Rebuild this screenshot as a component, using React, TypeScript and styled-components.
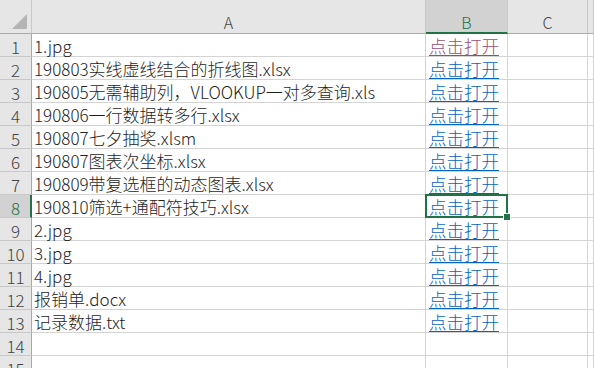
import React from "react";
import styled, { createGlobalStyle, css } from "styled-components";

const Global = createGlobalStyle`
  html, body { margin: 0; padding: 0; background: #ffffff; overflow: hidden; }
  body { font-family: "Noto Sans CJK SC", "Liberation Sans", sans-serif; }
`;

const COLS = "32px 394px 82px 80px 1fr";

const Sheet = styled.div`
  width: 594px;
  height: 368px;
  overflow: hidden;
  background: #fff;
`;

const Row = styled.div<{ $header?: boolean }>`
  display: grid;
  grid-template-columns: ${COLS};
  height: ${(p) => (p.$header ? "34px" : "23px")};
`;

const Corner = styled.div`
  position: relative;
  background: #e6e6e6;
  border-right: 1px solid #c8c8c8;
  border-bottom: 1px solid #a9a9a9;
  box-sizing: border-box;
`;

const Triangle = styled.div`
  position: absolute;
  right: 4px;
  bottom: 4px;
  width: 0;
  height: 0;
  border-left: 15px solid transparent;
  border-bottom: 15px solid #b4b4b4;
`;

const ColHead = styled.div<{ $sel?: boolean }>`
  box-sizing: border-box;
  background: ${(p) => (p.$sel ? "#d2d2d2" : "#e6e6e6")};
  border-right: 1px solid #c8c8c8;
  border-bottom: ${(p) => (p.$sel ? "2px solid #217346" : "1px solid #a9a9a9")};
  color: ${(p) => (p.$sel ? "#217346" : "#444444")};
  font-size: 16px;
  font-weight: 300;
  display: flex;
  align-items: flex-end;
  justify-content: center;
  padding-bottom: ${(p) => (p.$sel ? "0px" : "1px")};
  line-height: 20px;
`;

const RowHead = styled.div<{ $sel?: boolean }>`
  box-sizing: border-box;
  background: ${(p) => (p.$sel ? "#d2d2d2" : "#e6e6e6")};
  border-right: ${(p) => (p.$sel ? "2px solid #217346" : "1px solid #a9a9a9")};
  border-bottom: 1px solid #c8c8c8;
  color: ${(p) => (p.$sel ? "#217346" : "#444444")};
  font-size: 17px;
  font-weight: 300;
  display: flex;
  align-items: center;
  justify-content: center;
  line-height: 19px;
  padding-top: 2px;
  padding-left: ${(p) => (p.$sel ? "1px" : "0")};
`;

const Cell = styled.div<{ $sel?: boolean }>`
  position: relative;
  box-sizing: border-box;
  border-right: 1px solid #d4d4d4;
  border-bottom: 1px solid #d4d4d4;
  font-size: 17px;
  font-weight: 300;
  color: #1e1e1e;
  display: flex;
  align-items: center;
  padding-left: 2px;
  padding-top: 2px;
  white-space: nowrap;
  overflow: visible;
  line-height: 20px;
  ${(p) =>
    p.$sel &&
    css`
      &::after {
        content: "";
        position: absolute;
        left: -1px;
        top: -1px;
        right: -1px;
        bottom: -1px;
        border: 2px solid #217346;
        pointer-events: none;
        z-index: 2;
      }
    `}
`;

const Handle = styled.div`
  position: absolute;
  right: -4px;
  bottom: -4px;
  width: 6px;
  height: 6px;
  background: #217346;
  border: 1px solid #ffffff;
  z-index: 3;
`;

const Link = styled.span<{ $visited?: boolean }>`
  color: ${(p) => (p.$visited ? "#954f72" : "#0563c1")};
  text-decoration: underline;
  text-underline-offset: 2px;
  font-size: 17.5px;
  padding-left: 1px;
`;

const files = [
  "1.jpg",
  "190803实线虚线结合的折线图.xlsx",
  "190805无需辅助列，VLOOKUP一对多查询.xls",
  "190806一行数据转多行.xlsx",
  "190807七夕抽奖.xlsm",
  "190807图表次坐标.xlsx",
  "190809带复选框的动态图表.xlsx",
  "190810筛选+通配符技巧.xlsx",
  "2.jpg",
  "3.jpg",
  "4.jpg",
  "报销单.docx",
  "记录数据.txt",
  "",
  "",
];

export default function App() {
  return (
    <Sheet>
      <Global />
      <Row $header>
        <Corner>
          <Triangle />
        </Corner>
        <ColHead>A</ColHead>
        <ColHead $sel>B</ColHead>
        <ColHead>C</ColHead>
        <ColHead />
      </Row>
      {files.map((f, i) => {
        const n = i + 1;
        const sel = n === 8;
        return (
          <Row key={n}>
            <RowHead $sel={sel}>{n}</RowHead>
            <Cell>{f}</Cell>
            <Cell $sel={sel}>
              {f && <Link $visited={n === 1}>点击打开</Link>}
              {sel && <Handle />}
            </Cell>
            <Cell />
            <Cell />
          </Row>
        );
      })}
    </Sheet>
  );
}
